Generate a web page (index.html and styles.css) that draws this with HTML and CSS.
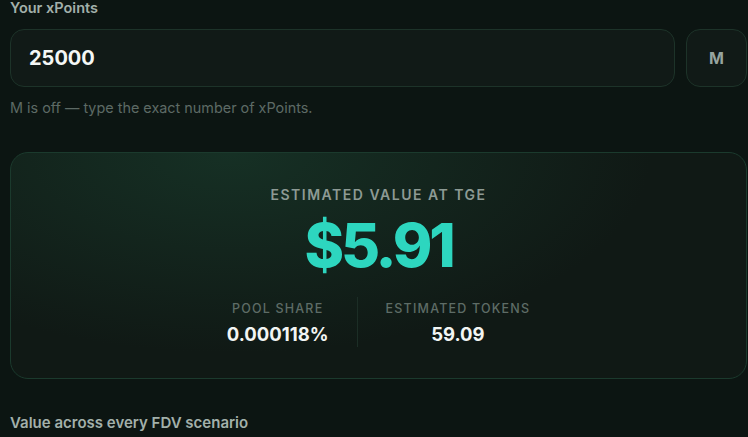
FILE: index.html
```html
<!DOCTYPE html>
<html lang="en">
<head>
<meta charset="utf-8">
<title>xPoints estimator</title>
<link rel="stylesheet" href="styles.css">
</head>
<body>
<main class="wrap">
  <label class="field-label" for="xp">Your xPoints</label>
  <div class="input-row">
    <div class="input-box"><span id="xp" class="input-value">25000</span></div>
    <button class="m-btn" type="button">M</button>
  </div>
  <p class="hint">M is off — type the exact number of xPoints.</p>

  <section class="card">
    <div class="card-title">ESTIMATED VALUE AT TGE</div>
    <div class="big-value">$5.91</div>
    <div class="stats">
      <div class="stat">
        <div class="stat-label">POOL SHARE</div>
        <div class="stat-value">0.000118%</div>
      </div>
      <div class="stat stat-div">
        <div class="stat-label">ESTIMATED TOKENS</div>
        <div class="stat-value">59.09</div>
      </div>
    </div>
  </section>

  <h2 class="section-title">Value across every FDV scenario</h2>
</main>
</body>
</html>
```
FILE: styles.css
```css
html, body {
  margin: 0;
  padding: 0;
  background: #0c1512;
  font-family: Inter, "Noto Sans", sans-serif;
  color: #e8eeeb;
  overflow: hidden;
}
.wrap {
  width: 737px;
  margin-left: 10px;
  padding-top: 0;
}
.field-label {
  display: block;
  font-size: 14.5px;
  font-weight: 600;
  line-height: 18px;
  color: #a2b0aa;
  margin-top: -1px;
}
.input-row {
  display: flex;
  gap: 11px;
  margin-top: 12px;
}
.input-box {
  flex: 1;
  height: 56px;
  border: 1px solid #1d3329;
  border-radius: 14px;
  background: #111a17;
  display: flex;
  align-items: center;
  padding-left: 18px;
}
.input-value {
  font-size: 20px;
  font-weight: 700;
  color: #f4f7f5;
}
.m-btn {
  width: 61px;
  height: 58px;
  border: 1px solid #1d3329;
  border-radius: 14px;
  background: #111a17;
  color: #97a59f;
  font-family: Inter, "Noto Sans", sans-serif;
  font-size: 16px;
  font-weight: 700;
  padding: 0;
}
.hint {
  margin: 12px 0 0;
  font-size: 14.4px;
  line-height: 18px;
  color: #5d6a65;
}
.card {
  margin-top: 35px;
  height: 225px;
  border: 1px solid #1b3a2d;
  border-radius: 18px;
  background:
    radial-gradient(ellipse 420px 200px at 30% 0%, rgba(24, 56, 42, 0.75), rgba(24, 56, 42, 0) 100%),
    #101915;
  display: flex;
  flex-direction: column;
  align-items: center;
  text-align: center;
}
.card-title {
  margin-top: 33px;
  font-size: 14px;
  font-weight: 600;
  letter-spacing: 1.5px;
  line-height: 18px;
  color: #8d9a94;
}
.big-value {
  margin-top: 7px;
  font-size: 60px;
  font-weight: 800;
  letter-spacing: -3.2px;
  line-height: 68px;
  color: #2dd6bf;
}
.stats {
  display: flex;
  margin-top: 18px;
}
.stat {
  padding: 4px 28px 2px;
}
.stat-div {
  border-left: 1px solid #1c2e26;
}
.stat-label {
  font-size: 12.5px;
  font-weight: 500;
  letter-spacing: 1.2px;
  line-height: 16px;
  color: #5e6c66;
}
.stat-value {
  margin-top: 6px;
  font-size: 18.5px;
  font-weight: 700;
  line-height: 22px;
  color: #f2f5f3;
}
.section-title {
  margin: 35px 0 0;
  font-size: 15px;
  font-weight: 600;
  line-height: 18px;
  color: #a2b0aa;
}
```
